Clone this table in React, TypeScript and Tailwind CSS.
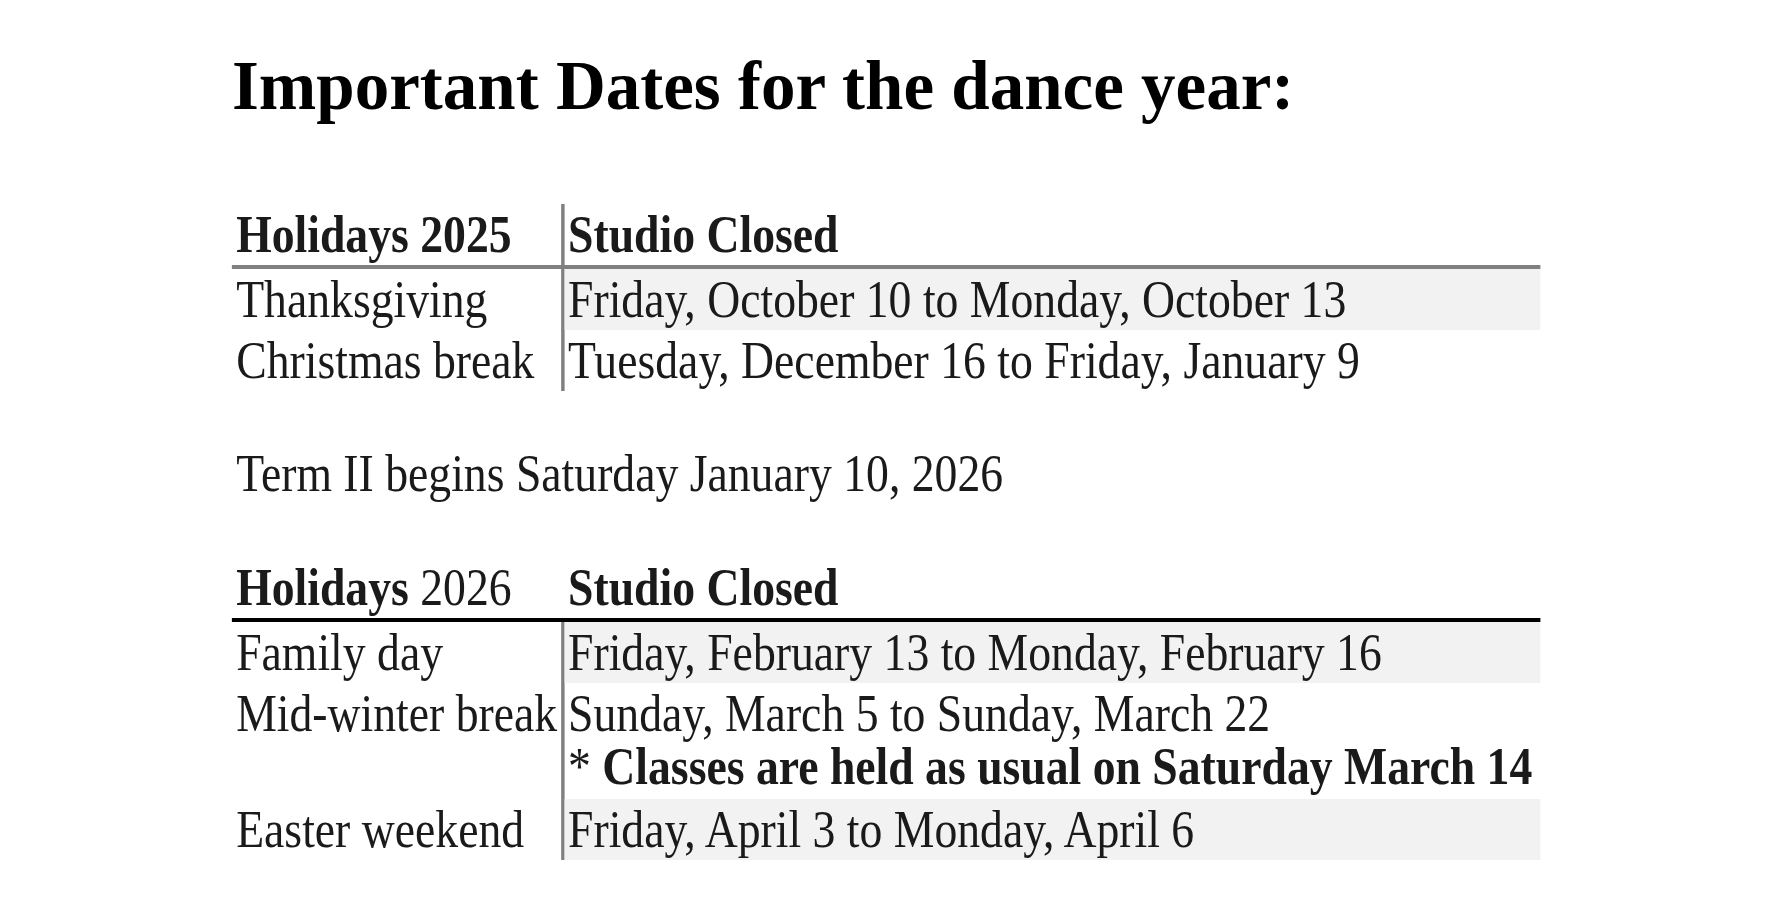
const serif = { fontFamily: '"Liberation Serif", "Times New Roman", serif' };

type Row = { name: string; dates: string; shaded: boolean; note?: string };

const rows2025: Row[] = [
  { name: 'Thanksgiving', dates: 'Friday, October 10 to Monday, October 13', shaded: true },
  { name: 'Christmas break', dates: 'Tuesday, December 16 to Friday, January 9', shaded: false },
];

const rows2026: Row[] = [
  { name: 'Family day', dates: 'Friday, February 13 to Monday, February 16', shaded: true },
  {
    name: 'Mid-winter break',
    dates: 'Sunday, March 5 to Sunday, March 22',
    shaded: false,
    note: 'Classes are held as usual on Saturday March 14',
  },
  { name: 'Easter weekend', dates: 'Friday, April 3 to Monday, April 6', shaded: true },
];

function DateRow({ row }: { row: Row }) {
  if (row.note) {
    return (
      <div className="grid grid-cols-[386px_1fr] whitespace-nowrap">
        <div className="border-r-4 border-[#808080] pl-[5px] pt-[4px] pb-[6px] leading-[53px]">{row.name}</div>
        <div className="pl-[4px] pt-[4px] pb-[6px] leading-[53px]">
          <div>{row.dates}</div>
          <div>
            * <span className="font-bold">{row.note}</span>
          </div>
        </div>
      </div>
    );
  }
  return (
    <div className="grid grid-cols-[386px_1fr] whitespace-nowrap leading-[61px]">
      <div className="border-r-4 border-[#808080] pl-[5px]">{row.name}</div>
      <div className={`pl-[4px] ${row.shaded ? 'bg-[#f2f2f2]' : ''}`}>{row.dates}</div>
    </div>
  );
}

export default function App() {
  return (
    <div className="w-full min-h-screen overflow-hidden bg-white text-[#1a1a1a]" style={serif}>
      <h1 className="pl-[232px] pt-[46px] text-[69px] leading-[80px] font-bold text-black whitespace-nowrap">
        Important Dates for the dance year:
      </h1>

      {/* the tables are squeezed horizontally, so lay out wide and scale down */}
      <div className="origin-top-left scale-x-[0.862] pl-[269px] pb-[40px]">
        {/* 2025 */}
        <div className="mt-[78px] w-[1518px] text-[53px]">
          <div className="grid grid-cols-[386px_1fr] border-b-4 border-[#808080] font-bold leading-[61px] whitespace-nowrap">
            <div className="border-r-4 border-[#808080] pl-[5px]">Holidays 2025</div>
            <div className="pl-[4px]">Studio Closed</div>
          </div>
          {rows2025.map((r) => (
            <DateRow key={r.name} row={r} />
          ))}
        </div>

        <p className="mt-[52px] pl-[5px] text-[53px] leading-[61px] whitespace-nowrap">
          Term II begins Saturday January 10, 2026
        </p>

        {/* 2026 */}
        <div className="mt-[53px] w-[1518px] text-[53px]">
          <div className="grid grid-cols-[386px_1fr] border-b-4 border-black leading-[61px] whitespace-nowrap">
            <div className="pl-[5px]">
              <span className="font-bold">Holidays</span> 2026
            </div>
            <div className="pl-[4px] font-bold">Studio Closed</div>
          </div>
          {rows2026.map((r) => (
            <DateRow key={r.name} row={r} />
          ))}
        </div>
      </div>
    </div>
  );
}
